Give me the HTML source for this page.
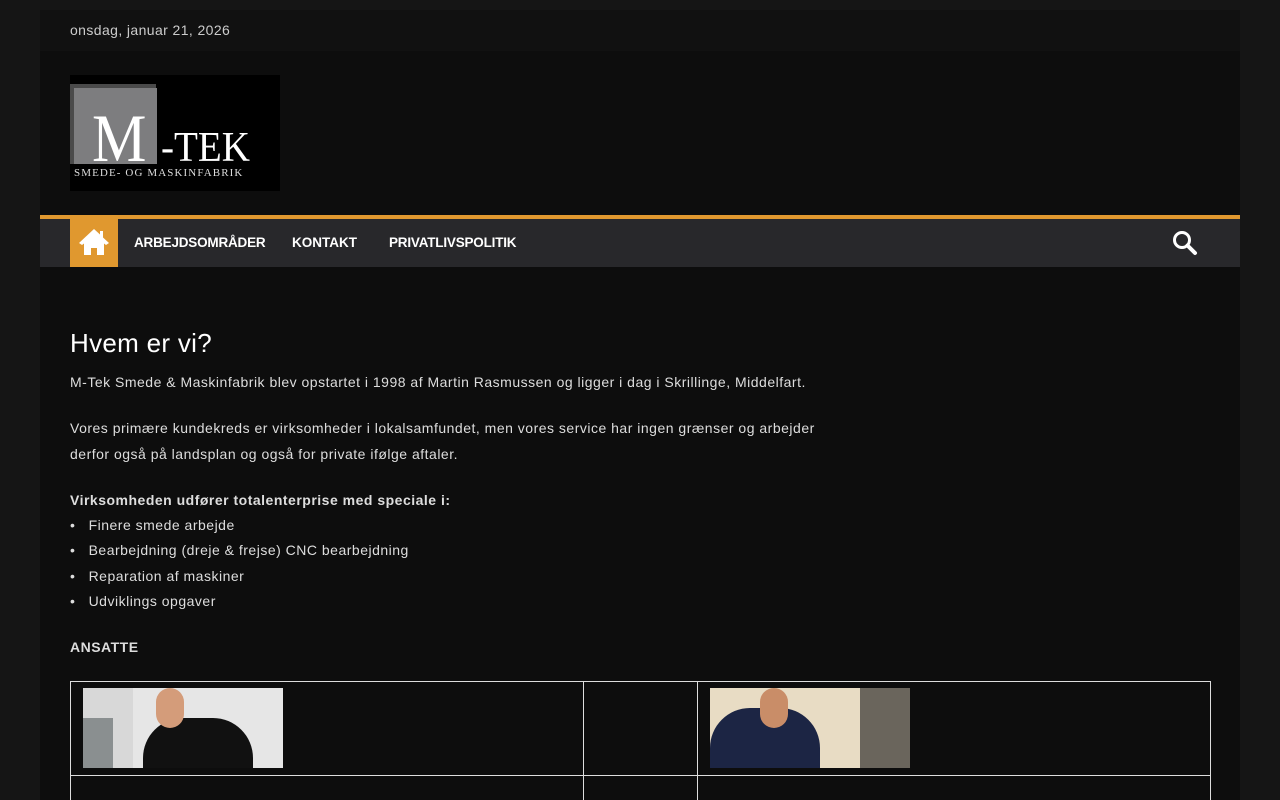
<!DOCTYPE html>
<html><head><meta charset="utf-8"><style>
*{margin:0;padding:0;box-sizing:border-box}
html,body{width:1280px;height:800px;overflow:hidden}
body{background:#151515;font-family:"Liberation Sans","DejaVu Sans",sans-serif;color:#ddd;position:relative}
.wrap{position:absolute;left:40px;top:10px;width:1200px;height:790px;background:#0d0d0d;overflow:hidden}
.top{height:41px;background:#111;font-size:14px;color:#ccc;padding:12px 30px;letter-spacing:0.4px}
.logo{position:absolute;left:30px;top:65px;width:210px;height:116px;background:#000;overflow:hidden}
.nav{position:absolute;left:0;top:205px;width:1200px;height:52px;background:#28282b;border-top:4px solid #e0982f}
.home{position:absolute;left:30px;top:0;width:48px;height:48px;background:#e0982f}
.nav a{position:absolute;top:16px;font-size:13.5px;font-weight:bold;color:#fff;text-decoration:none;white-space:nowrap}
.content{position:absolute;left:30px;top:316px;font-size:14px;line-height:25.3px;color:#ddd;letter-spacing:0.5px}
h1{font-size:26px;font-weight:normal;color:#fff;margin-bottom:10px;line-height:34px;letter-spacing:0.3px}
p{margin-bottom:21px}
table{position:absolute;left:30px;top:671px;border-collapse:collapse}
td{border:1px solid #ddd;height:94px;vertical-align:top;padding:6px 12px}
</style></head><body><div class="wrap">
<div class="top">onsdag, januar 21, 2026</div>
<div class="logo">
<div style="position:absolute;left:0;top:9px;width:86px;height:80px;background:#4a4a4a"></div>
<div style="position:absolute;left:4px;top:13px;width:83px;height:76px;background:#7d7d7f"></div>
<div style="position:absolute;left:22px;top:30px;font-family:'Liberation Serif',serif;font-size:68px;line-height:66px;color:#fff;transform:scaleX(0.9);transform-origin:left">M</div>
<div style="position:absolute;left:91px;top:54px;font-family:'Liberation Serif',serif;font-size:42px;line-height:38px;color:#fff;transform:scaleX(0.93);transform-origin:left">-TEK</div>
<div style="position:absolute;left:4px;top:92px;font-family:'Liberation Serif',serif;font-size:11px;letter-spacing:1.1px;color:#ddd;white-space:nowrap">SMEDE- OG MASKINFABRIK</div>
</div>
<div class="nav">
<div class="home"><svg width="48" height="48" viewBox="0 0 48 48"><path d="M24 10 L9 24 L12 26 L14 24.5 L14 36 L21 36 L21 29 L27 29 L27 36 L34 36 L34 24.5 L36 26 L39 24 L33 18.5 L33 12 L30 12 L30 15.5 Z" fill="#fff"/></svg></div>
<a style="left:94px;letter-spacing:-0.2px">ARBEJDSOMRÅDER</a>
<a style="left:252px">KONTAKT</a>
<a style="left:349px;letter-spacing:-0.2px">PRIVATLIVSPOLITIK</a>
<svg style="position:absolute;left:1132px;top:11px" width="26" height="26" viewBox="0 0 26 26"><circle cx="10" cy="10" r="7.5" fill="none" stroke="#fff" stroke-width="3"/><path d="M15.5 15.5 L23 23" stroke="#fff" stroke-width="4" stroke-linecap="round"/></svg>
</div>
<div class="content">
<h1>Hvem er vi?</h1>
<p>M-Tek Smede &amp; Maskinfabrik blev opstartet i 1998 af Martin Rasmussen og ligger i dag i Skrillinge, Middelfart.</p>
<p>Vores primære kundekreds er virksomheder i lokalsamfundet, men vores service har ingen grænser og arbejder<br>derfor også på landsplan og også for private ifølge aftaler.</p>
<p style="margin-bottom:21px"><b>Virksomheden udfører totalenterprise med speciale i:</b><br>•&nbsp;&nbsp; Finere smede arbejde<br>•&nbsp;&nbsp; Bearbejdning (dreje &amp; frejse) CNC bearbejdning<br>•&nbsp;&nbsp; Reparation af maskiner<br>•&nbsp;&nbsp; Udviklings opgaver</p>
<p><b>ANSATTE</b></p>
</div>
<table><tr>
<td style="width:513px"><div style="width:200px;height:80px;background:linear-gradient(90deg,#d8d8d8 0 25%,#e6e6e6 25% 100%);position:relative;overflow:hidden"><div style="position:absolute;left:0;top:30px;width:30px;height:50px;background:#8a8f90"></div><div style="position:absolute;left:60px;top:30px;width:110px;height:60px;background:#111;border-radius:40px 40px 0 0"></div><div style="position:absolute;left:73px;top:0;width:28px;height:40px;background:#d49c7a;border-radius:14px"></div></div></td>
<td style="width:114px"></td>
<td style="width:513px"><div style="width:200px;height:80px;background:#e8dcc4;position:relative;overflow:hidden"><div style="position:absolute;left:0;top:20px;width:110px;height:70px;background:#1c2544;border-radius:40px 40px 0 0"></div><div style="position:absolute;left:50px;top:0;width:28px;height:40px;background:#c98d68;border-radius:14px"></div><div style="position:absolute;left:150px;top:0;width:50px;height:80px;background:#6a655c"></div></div></td>
</tr><tr><td></td><td></td><td></td></tr></table>
</div></body></html>
